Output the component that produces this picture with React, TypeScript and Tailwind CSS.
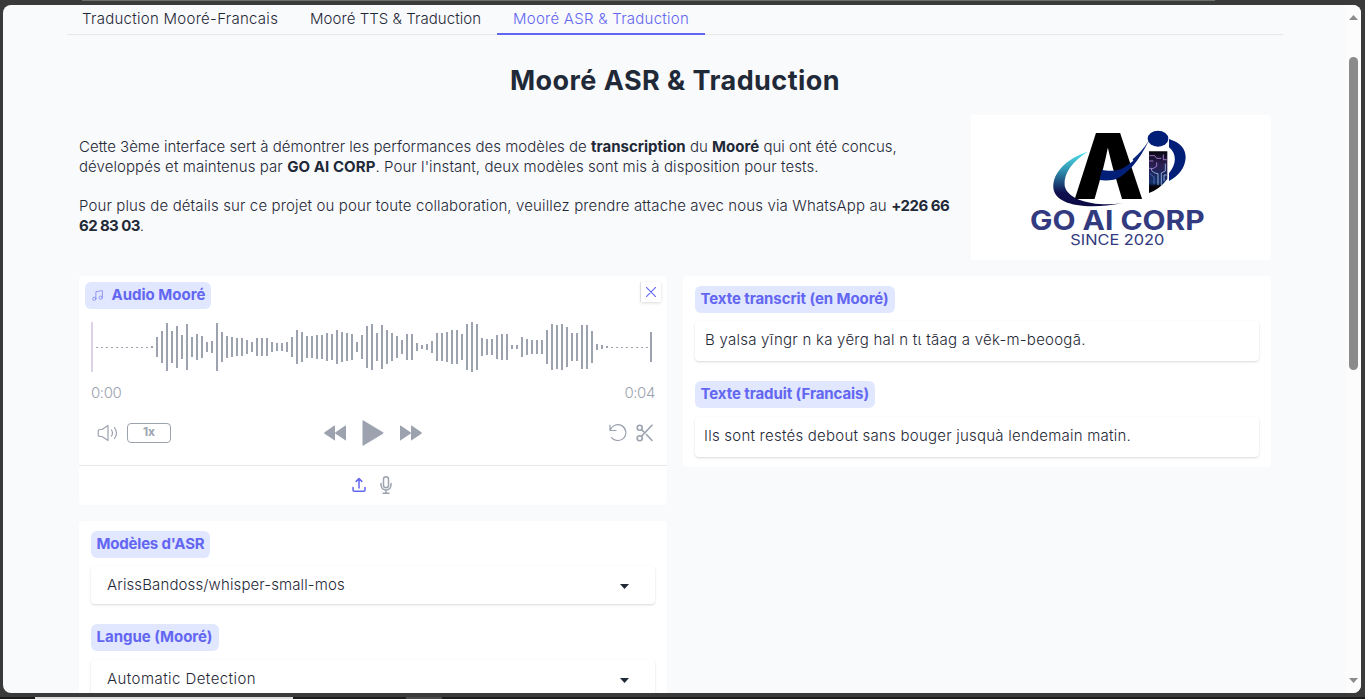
import React from "react";

const bars = [
  20, 32, 48, 32, 42, 24, 46, 20, 26, 22, 10, 12, 48, 30, 22, 20, 18, 18, 14, 10, 18, 18, 18, 10, 8, 8, 10, 20, 34, 30,
  22, 22, 24, 24, 28, 26, 34, 30, 28, 26, 10, 24, 42, 46, 28, 44, 34, 28, 22, 14, 26, 26, 8, 4, 6, 12, 28, 28, 30, 34,
  34, 26, 46, 50, 46, 18, 16, 16, 24, 26, 26, 4, 4, 20, 16, 14, 14, 14, 34, 46, 44, 46, 40, 28, 28, 44, 44, 32, 6, 4, 2,
];

function Waveform() {
  const lead = Array.from({ length: 11 }, (_, i) => 6 + i * 5);
  const tail = Array.from({ length: 8 }, (_, i) => 521 + i * 5);
  return (
    <svg width="564" height="50" viewBox="0 0 564 50" shapeRendering="crispEdges" className="block">
      <rect x="0" y="0" width="2" height="50" fill="#ddd3e8" />
      {lead.map((x) => (
        <rect key={x} x={x - 1} y="25" width="2" height="1" fill="#9ca3af" />
      ))}
      <rect x="60" y="24" width="2" height="2" fill="#9ca3af" />
      {bars.map((h, i) => (
        <rect key={i} x={65 + i * 5} y={25 - h / 2} width="2" height={h} fill="#9ca3af" />
      ))}
      {tail.map((x) => (
        <rect key={x} x={x - 1} y="25" width="2" height="1" fill="#9ca3af" />
      ))}
      <rect x="559" y="10" width="2" height="30" fill="#9ca3af" />
    </svg>
  );
}

function Logo() {
  return (
    <svg width="300" height="145" viewBox="33 30 900 435" className="block">
      <defs>
        <linearGradient id="arc" x1="0" y1="0" x2="0" y2="1">
          <stop offset="0" stopColor="#4fe3ec" />
          <stop offset="0.35" stopColor="#2f8fae" />
          <stop offset="0.75" stopColor="#10104f" />
          <stop offset="1" stopColor="#0c0a44" />
        </linearGradient>
        <linearGradient id="chip" x1="0" y1="0" x2="0" y2="1">
          <stop offset="0" stopColor="#08060f" />
          <stop offset="0.3" stopColor="#2a1c50" />
          <stop offset="0.75" stopColor="#14306a" />
          <stop offset="0.85" stopColor="#020208" />
        </linearGradient>
      </defs>
      <path d="M384 140C320 160 278 202 280 248C284 298 370 316 487 295C400 306 322 284 314 242C310 204 338 168 384 140Z" fill="url(#arc)" />
      <text transform="translate(338 282) scale(1.03 1)" fontSize="271" fontWeight="900" textLength="208" lengthAdjust="spacingAndGlyphs" fill="#000" className="font-['Inter',sans-serif]">Λ</text>
      <path d="M418 225C440 228 466 226 482 215C520 190 545 150 566 108C540 150 516 176 484 192C462 200 440 198 426 194Z" fill="#021f78" />
      <path d="M549 139H567V264L549 250Z" fill="#fff" />
      <path d="M520 168Q545 145 566 108Q545 140 518 163Z" fill="#021f78" />
      <ellipse cx="594" cy="101" rx="31" ry="24" fill="#021f78" />
      <path d="M627 102C660 112 678 132 677 158C675 190 655 213 627 228V205C651 176 650 146 627 127Z" fill="#021f78" />
      <path d="M567 139H622V222Q600 252 567 264Z" fill="url(#chip)" />
      <g fill="none" stroke="#b58be0" strokeWidth="2.5">
        <path d="M568 152H584L590 160H604M610 148V164H620M568 168H580M568 190Q580 194 590 184V172" />
        <path d="M594 240V206Q576 204 574 192M604 240V204L616 198V176M612 228V210H620" stroke="#9fc3ee" />
        <path d="M570 206L582 216V238" stroke="#4a78c8" />
      </g>
      <g fill="#323a80" className="font-['Inter',sans-serif]">
        <text x="210" y="374" fontSize="80" fontWeight="700" textLength="524" lengthAdjust="spacingAndGlyphs">GO AI CORP</text>
        <text x="331" y="419" fontSize="43" fontWeight="400" textLength="282" lengthAdjust="spacingAndGlyphs">SINCE 2020</text>
      </g>
    </svg>
  );
}

function Label({ children, tracking = "", icon }: { children: React.ReactNode; tracking?: string; icon?: React.ReactNode }) {
  return (
    <div className="flex h-[27px] w-fit items-center whitespace-nowrap rounded-md bg-[#e0e7ff] pb-px pl-[5.5px] pr-1.5 text-[15px] font-bold text-[#6366f1]">
      {icon}
      <span className={tracking}>{children}</span>
    </div>
  );
}

const icon = { fill: "none", stroke: "currentColor", strokeLinecap: "round" as const, strokeLinejoin: "round" as const };

const field =
  "flex items-center rounded bg-white text-[15px] font-light whitespace-nowrap shadow-[0_1px_3px_rgba(0,0,0,0.1),0_1px_2px_rgba(0,0,0,0.06)]";

function Select({ children, tracking }: { children: React.ReactNode; tracking: string }) {
  return (
    <div className={field + " h-[38px] justify-between pl-4 pr-[26px]"}>
      <span className={tracking}>{children}</span>
      <svg width="9" height="5" viewBox="0 0 9 5" fill="#1f2937" className="mt-[3px]"><path d="M0 0H9L4.5 5Z" /></svg>
    </div>
  );
}

export default function App() {
  return (
    <div className="flex h-[699px] w-[1365px] flex-col overflow-hidden bg-[#3a3a3a] font-['Inter',sans-serif] text-[#1f2937]">
      <div className="h-[5px] pl-[82px]"><div className="h-px w-[1133px] bg-[#6a6f6c]" /></div>
      <div className="ml-[3px] flex h-[688px] w-[1358px] overflow-hidden rounded-lg bg-[#f9fafc]">
        <main className="w-[1343px] pl-16 pr-[63px]">
          <nav className="flex h-[30px] whitespace-nowrap border-b border-[#e5e7eb] text-[15px] font-light leading-[27px]">
            <div className="h-[30px] w-[227px] pl-[15px] tracking-[0.28px]">Traduction Mooré-Francais</div>
            <div className="h-[30px] w-[203px] pl-4 tracking-[0.05px]">Mooré TTS &amp; Traduction</div>
            <div className="h-[30px] w-[208px] border-b-2 border-[#6366f1] pl-4 tracking-[0.25px] text-[#6366f1]">Mooré ASR &amp; Traduction</div>
          </nav>
          <div className="px-3">
            <h1 className="mt-[26px] h-10 text-center text-[27px] font-bold leading-10 tracking-[0.45px]">Mooré ASR &amp; Traduction</h1>
            <div className="mt-[14px] flex h-[145px] justify-between">
              <div className="whitespace-nowrap pt-[22px] text-[15px] font-light leading-5 [&_b]:font-bold">
                <p>
                  <span className="tracking-[0.01px]">Cette 3ème interface sert à démontrer les performances des modèles de <b>transcription</b> du <b>Mooré</b> qui ont été concus,</span><br />
                  <span className="tracking-[0.075px]">développés et maintenus par <b>GO AI CORP</b>. Pour l'instant, deux modèles sont mis à disposition pour tests.</span>
                </p>
                <p className="mt-[19px]">
                  <span className="tracking-[0.13px]">Pour plus de détails sur ce projet ou pour toute collaboration, veuillez prendre attache avec nous via WhatsApp au <b className="tracking-[-0.5px]">+226 66</b></span><br />
                  <span className="tracking-[-0.6px]"><b>62 83 03</b>.</span>
                </p>
              </div>
              <div className="h-[145px] w-[300px] shrink-0 overflow-hidden rounded-r bg-white"><Logo /></div>
            </div>
            <div className="mt-4 grid grid-cols-2 items-start gap-4">
              <div className="flex flex-col gap-4">
                <section className="h-[229px] rounded bg-white">
                  <div className="flex h-[46px] items-start justify-between px-1.5 pt-1.5">
                    <Label icon={
                      <svg width="13" height="13" viewBox="0 0 24 24" strokeWidth="1.6" className="mr-2 mt-px opacity-70" {...icon}><path d="M9 18V5l12-2v13" /><circle cx="6" cy="18" r="3" /><circle cx="18" cy="16" r="3" /></svg>
                    }>Audio Mooré</Label>
                    <div className="flex size-5 items-center justify-center bg-white text-[#6366f1] shadow-[0_1px_3px_rgba(0,0,0,0.15),-1px_0_0_rgba(0,0,0,0.08)]">
                      <svg width="10" height="10" viewBox="0 0 10 10" strokeWidth="1.1" {...icon}><path d="M.3 .3L9.7 9.7M9.7 .3L.3 9.7" /></svg>
                    </div>
                  </div>
                  <div className="pl-3"><Waveform /></div>
                  <div className="mt-3 flex h-[18px] items-center justify-between px-3 text-[15px] font-light tracking-[-0.4px] text-[#9ca3af]"><span>0:00</span><span>0:04</span></div>
                  <div className="mt-[18px] grid h-[26px] grid-cols-3 items-center px-3 text-[#9ca3af]">
                    <div className="flex items-center pl-1.5">
                      <svg width="22" height="18" viewBox="0 0 22 18" strokeWidth="1.2" {...icon}><path d="M5 5.5L11 1.5V16.5L5 12.5H3Q1.2 12.5 1.2 10.5V7.5Q1.2 5.5 3 5.5ZM14.5 6Q16.5 9 14.5 12M17.5 3.5Q21.5 9 17.5 14.5" /></svg>
                      <div className="ml-2 flex h-5 w-11 items-center justify-center rounded border border-[#9ca3af] pb-0.5 text-xs font-bold">1x</div>
                    </div>
                    <div className="flex items-center justify-center gap-[15px]">
                      <svg width="24" height="16" viewBox="0 0 24 16" fill="currentColor"><path d="M12 1V15Q12 16 11 15L1.6 8.7Q.6 8 1.6 7.3L11 .8Q12 0 12 1ZM23 1V15Q23 16 22 15L12.5 8.7Q11.5 8 12.5 7.3L22 .8Q23 0 23 1Z" /></svg>
                      <svg width="22" height="26" viewBox="0 0 22 26" fill="currentColor"><path d="M.5 1Q.5-.2 1.5.5L21 12.3Q22 13 21 13.7L1.5 25.5Q.5 26.2.5 25Z" /></svg>
                      <svg width="24" height="16" viewBox="0 0 24 16" fill="currentColor"><path d="M12 1V15Q12 16 13 15L22.4 8.7Q23.4 8 22.4 7.3L13 .8Q12 0 12 1ZM1 1V15Q1 16 2 15L11.5 8.7Q12.5 8 11.5 7.3L2 .8Q1 0 1 1Z" /></svg>
                    </div>
                    <div className="flex items-center justify-end gap-2 pr-0.5">
                      <svg width="19" height="18" viewBox="0 0 19 18" strokeWidth="1.2" {...icon}><path d="M1 1V6.5H7M1.2 6.3A8 8 0 1 1 2.5 13.5" /></svg>
                      <svg width="17" height="18" viewBox="0 0 17 18" strokeWidth="1.6" {...icon}><circle cx="3.7" cy="3.7" r="2.5" /><circle cx="3.7" cy="14.3" r="2.5" /><path d="M16 1.2L5.5 12.3M10.5 10.5L16 16.5M5.5 5.7L9 9" /></svg>
                    </div>
                  </div>
                  <div className="mt-[19px] flex h-[38px] items-center justify-center gap-3 border-t border-[#e5e7eb] pr-0.5">
                    <svg width="16" height="16" viewBox="0 0 16 16" strokeWidth="1.5" className="text-[#6366f1]" {...icon}><path d="M2 10.5V13Q2 14.3 3.3 14.3H12.7Q14 14.3 14 13V10.5M8 11V1.8M5.2 4.4L8 1.6L10.8 4.4" /></svg>
                    <svg width="14" height="18" viewBox="0 0 14 18" strokeWidth="1.5" className="text-[#9ca3af]" {...icon}><rect x="4.5" y=".8" width="5" height="11" rx="2.5" /><path d="M2 7.5V9Q2.5 14 7 14Q11.5 14 12 9V7.5M7 14V17.2M4 17.2H10" /></svg>
                  </div>
                </section>
                <section className="h-[300px] rounded bg-white px-3 pt-2.5">
                  <Label tracking="tracking-[-0.2px]">Modèles d'ASR</Label>
                  <div className="mt-2"><Select tracking="tracking-[0.12px]">ArissBandoss/whisper-small-mos</Select></div>
                  <div className="mb-[9px] mt-5"><Label>Langue (Mooré)</Label></div>
                  <Select tracking="tracking-[0.44px]">Automatic Detection</Select>
                </section>
              </div>
              <section className="h-[191px] rounded bg-white px-3 pt-2.5">
                <Label tracking="tracking-[-0.08px]">Texte transcrit (en Mooré)</Label>
                <div className={field + " mt-2 h-10 pb-0.5 pl-2.5 tracking-[0.25px]"}>B yalsa yĩngr n ka yẽrg hal n tɩ tãag a vẽk-m-beoogã.</div>
                <div className="mb-[9px] mt-5"><Label tracking="tracking-[-0.08px]">Texte traduit (Francais)</Label></div>
                <div className={field + " h-10 pb-0.5 pl-[9px] tracking-[0.23px]"}>Ils sont restés debout sans bouger jusquà lendemain matin.</div>
              </section>
            </div>
          </div>
        </main>
        <aside className="flex w-[15px] flex-col items-center bg-[#fcfcfc]">
          <svg width="9" height="5" viewBox="0 0 9 5" className="mt-2.5" fill="#8b8b8b"><path d="M0 5L4.5 0L9 5Z" /></svg>
          <div className="mt-[37px] h-[313px] w-[9px] rounded-full bg-[#8b8b8b]" />
          <svg width="9" height="5" viewBox="0 0 9 5" className="mb-2.5 mt-auto" fill="#8b8b8b"><path d="M0 0L4.5 5L9 0Z" /></svg>
        </aside>
      </div>
      <div className="mt-1 flex h-[2px] bg-[#1b1a1c]"><div className="ml-[35px] w-[258px] bg-[#ddd]" /><div className="ml-[113px] w-9 bg-[#4a4a4a]" /></div>
    </div>
  );
}
